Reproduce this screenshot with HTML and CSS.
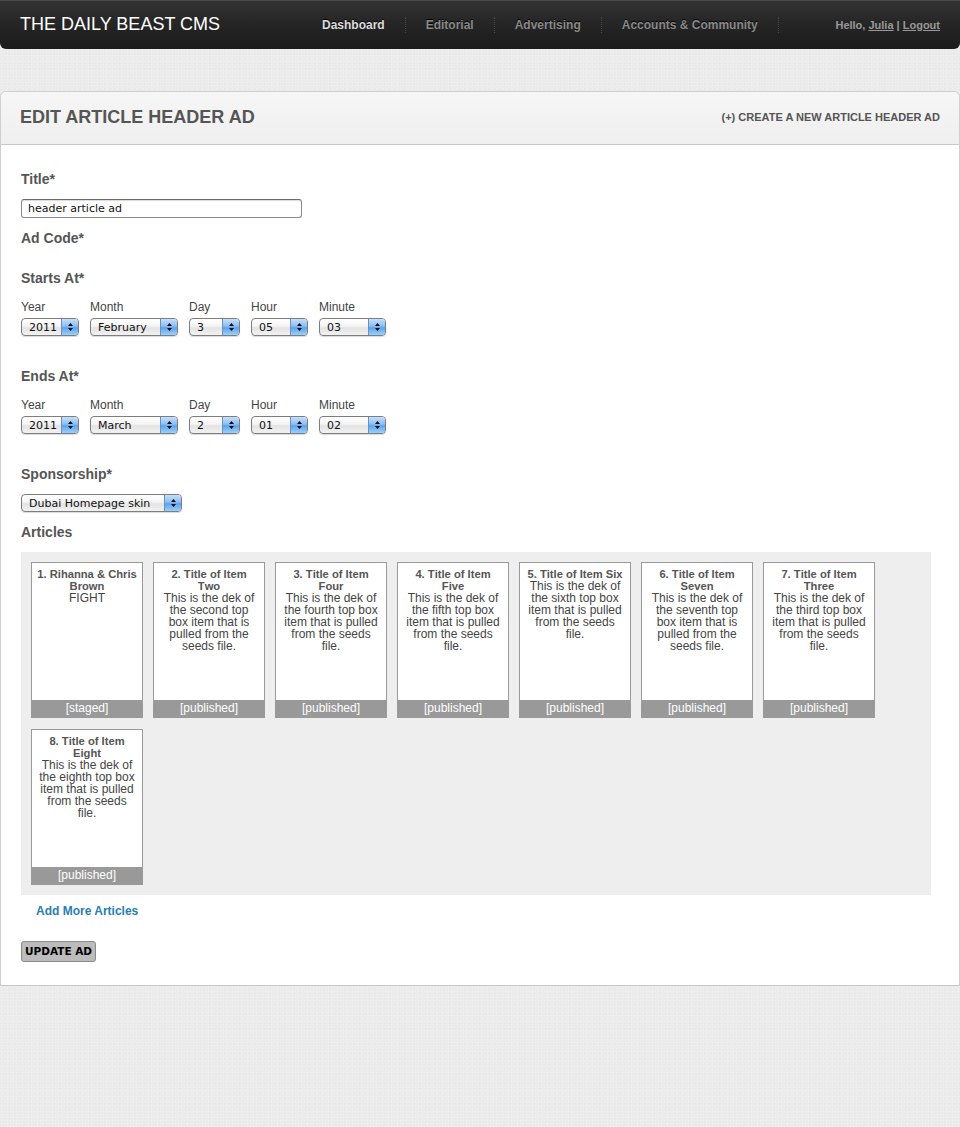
FILE: index.html
```html
<!DOCTYPE html>
<html>
<head>
<meta charset="utf-8">
<title>Edit Article Header Ad</title>
<link rel="stylesheet" href="styles.css">
</head>
<body>
<header class="topbar">
  <div class="logo">THE DAILY BEAST CMS</div>
  <nav class="mainnav">
    <a class="nav-item active">Dashboard</a>
    <a class="nav-item">Editorial</a>
    <a class="nav-item">Advertising</a>
    <a class="nav-item">Accounts &amp; Community</a>
  </nav>
  <div class="user">Hello, <a>Julia</a> | <a>Logout</a></div>
</header>

<section class="panel">
  <div class="panel-head">
    <h1>EDIT ARTICLE HEADER AD</h1>
    <a class="create-link">(+) CREATE A NEW ARTICLE HEADER AD</a>
  </div>
  <div class="panel-body">
    <h3 class="label first">Title*</h3>
    <div class="textinput">header article ad</div>

    <h3 class="label">Ad Code*</h3>

    <h3 class="label gap-l">Starts At*</h3>
    <div class="date-row">
      <div class="field"><div class="sublabel">Year</div><div class="select w-year"><span>2011</span><span class="arrow"><svg width="7" height="10" viewBox="0 0 7 10"><path d="M3.5 1 L6 4 L1 4 Z M3.5 9 L6 6 L1 6 Z" fill="#111"/></svg></span></div></div>
      <div class="field"><div class="sublabel">Month</div><div class="select w-month"><span>February</span><span class="arrow"><svg width="7" height="10" viewBox="0 0 7 10"><path d="M3.5 1 L6 4 L1 4 Z M3.5 9 L6 6 L1 6 Z" fill="#111"/></svg></span></div></div>
      <div class="field"><div class="sublabel">Day</div><div class="select w-day"><span>3</span><span class="arrow"><svg width="7" height="10" viewBox="0 0 7 10"><path d="M3.5 1 L6 4 L1 4 Z M3.5 9 L6 6 L1 6 Z" fill="#111"/></svg></span></div></div>
      <div class="field"><div class="sublabel">Hour</div><div class="select w-hour"><span>05</span><span class="arrow"><svg width="7" height="10" viewBox="0 0 7 10"><path d="M3.5 1 L6 4 L1 4 Z M3.5 9 L6 6 L1 6 Z" fill="#111"/></svg></span></div></div>
      <div class="field"><div class="sublabel">Minute</div><div class="select w-minute"><span>03</span><span class="arrow"><svg width="7" height="10" viewBox="0 0 7 10"><path d="M3.5 1 L6 4 L1 4 Z M3.5 9 L6 6 L1 6 Z" fill="#111"/></svg></span></div></div>
    </div>

    <h3 class="label gap-xl">Ends At*</h3>
    <div class="date-row">
      <div class="field"><div class="sublabel">Year</div><div class="select w-year"><span>2011</span><span class="arrow"><svg width="7" height="10" viewBox="0 0 7 10"><path d="M3.5 1 L6 4 L1 4 Z M3.5 9 L6 6 L1 6 Z" fill="#111"/></svg></span></div></div>
      <div class="field"><div class="sublabel">Month</div><div class="select w-month"><span>March</span><span class="arrow"><svg width="7" height="10" viewBox="0 0 7 10"><path d="M3.5 1 L6 4 L1 4 Z M3.5 9 L6 6 L1 6 Z" fill="#111"/></svg></span></div></div>
      <div class="field"><div class="sublabel">Day</div><div class="select w-day"><span>2</span><span class="arrow"><svg width="7" height="10" viewBox="0 0 7 10"><path d="M3.5 1 L6 4 L1 4 Z M3.5 9 L6 6 L1 6 Z" fill="#111"/></svg></span></div></div>
      <div class="field"><div class="sublabel">Hour</div><div class="select w-hour"><span>01</span><span class="arrow"><svg width="7" height="10" viewBox="0 0 7 10"><path d="M3.5 1 L6 4 L1 4 Z M3.5 9 L6 6 L1 6 Z" fill="#111"/></svg></span></div></div>
      <div class="field"><div class="sublabel">Minute</div><div class="select w-minute"><span>02</span><span class="arrow"><svg width="7" height="10" viewBox="0 0 7 10"><path d="M3.5 1 L6 4 L1 4 Z M3.5 9 L6 6 L1 6 Z" fill="#111"/></svg></span></div></div>
    </div>

    <h3 class="label gap-xl">Sponsorship*</h3>
    <div class="select w-sponsor single"><span>Dubai Homepage skin</span><span class="arrow"><svg width="7" height="10" viewBox="0 0 7 10"><path d="M3.5 1 L6 4 L1 4 Z M3.5 9 L6 6 L1 6 Z" fill="#111"/></svg></span></div>

    <h3 class="label">Articles</h3>
    <div class="articles">
      <div class="card"><div class="card-text"><b>1. Rihanna &amp; Chris Brown</b><br>FIGHT</div><div class="status">[staged]</div></div>
      <div class="card"><div class="card-text"><b>2. Title of Item Two</b><br>This is the dek of the second top box item that is pulled from the seeds file.</div><div class="status">[published]</div></div>
      <div class="card"><div class="card-text"><b>3. Title of Item Four</b><br>This is the dek of the fourth top box item that is pulled from the seeds file.</div><div class="status">[published]</div></div>
      <div class="card"><div class="card-text"><b>4. Title of Item Five</b><br>This is the dek of the fifth top box item that is pulled from the seeds file.</div><div class="status">[published]</div></div>
      <div class="card"><div class="card-text"><b>5. Title of Item Six</b><br>This is the dek of the sixth top box item that is pulled from the seeds file.</div><div class="status">[published]</div></div>
      <div class="card"><div class="card-text"><b>6. Title of Item Seven</b><br>This is the dek of the seventh top box item that is pulled from the seeds file.</div><div class="status">[published]</div></div>
      <div class="card"><div class="card-text"><b>7. Title of Item Three</b><br>This is the dek of the third top box item that is pulled from the seeds file.</div><div class="status">[published]</div></div>
      <div class="card"><div class="card-text"><b>8. Title of Item Eight</b><br>This is the dek of the eighth top box item that is pulled from the seeds file.</div><div class="status">[published]</div></div>
    </div>
    <a class="add-more">Add More Articles</a>
    <div><button class="update-btn">UPDATE AD</button></div>
  </div>
</section>
</body>
</html>
```
FILE: styles.css
```css
html, body {
  margin: 0;
  padding: 0;
}
body {
  background-color: #ebebeb;
  background-image:
    radial-gradient(rgba(255,255,255,0.35) 1px, transparent 1px),
    radial-gradient(rgba(0,0,0,0.015) 1px, transparent 1px);
  background-size: 3px 3px, 5px 5px;
  background-position: 0 0, 2px 1px;
  font-family: "Liberation Sans", Arial, sans-serif;
  color: #555;
  min-height: 1127px;
}

/* top bar */
.topbar {
  height: 49px;
  box-sizing: border-box;
  display: flex;
  align-items: center;
  background: linear-gradient(#343434 0, #272727 40%, #1b1b1b 100%);
  border-top: 1px solid #4a4a4a;
  border-radius: 0 0 6px 6px;
  padding: 0 20px;
}
.logo {
  color: #fff;
  font-size: 18px;
  line-height: 20px;
  width: 302px;
  flex: none;
  margin-top: -2px;
}
.mainnav {
  display: flex;
  align-items: center;
}
.nav-item {
  font-size: 12px;
  font-weight: bold;
  color: #8a8a8a;
  padding: 0 20px;
  line-height: 16px;
  border-right: 1px dotted #484848;
  text-decoration: none;
  text-shadow: 0 -1px 0 #000;
}
.nav-item:first-child {
  padding-left: 0;
}
.nav-item.active {
  color: #ddd;
}
.user {
  margin-left: auto;
  font-size: 11px;
  font-weight: bold;
  color: #999;
}
.user a {
  text-decoration: underline;
  color: #999;
}

/* panel */
.panel {
  margin-top: 42px;
  background: #fff;
  border: 1px solid #cfcfcf;
  border-radius: 6px 6px 0 0;
  border-bottom-color: #c8c8c8;
}
.panel-head {
  height: 52px;
  display: flex;
  align-items: center;
  justify-content: space-between;
  padding: 0 19px 0 19px;
  background: linear-gradient(#f6f6f6, #efefef);
  border-bottom: 1px solid #c9c9c9;
  border-radius: 6px 6px 0 0;
}
.panel-head h1 {
  margin: -2px 0 0 0;
  font-size: 18px;
  font-weight: bold;
  color: #555;
}
.create-link {
  font-size: 11px;
  font-weight: bold;
  color: #555;
  margin-top: -2px;
}
.panel-body {
  padding: 24px 20px 23px 20px;
}

.label {
  margin: 10px 0 0 0;
  font-size: 14px;
  line-height: 20px;
  font-weight: bold;
  color: #555;
}
.label.first { margin-top: 0; }
.label.gap-l { margin-top: 20px; }
.label.gap-xl { margin-top: 30px; }

.textinput {
  margin-top: 10px;
  width: 281px;
  height: 19px;
  box-sizing: border-box;
  border: 1px solid #8a8a8a;
  border-top-color: #6a6a6a;
  border-radius: 3px;
  padding: 0 6px;
  font-family: "DejaVu Sans", sans-serif;
  font-size: 11px;
  line-height: 18px;
  color: #111;
  box-shadow: inset 0 1px 1px rgba(0,0,0,0.15);
}

.date-row {
  display: flex;
  gap: 11px;
  margin-top: 12px;
}
.sublabel {
  font-size: 12px;
  line-height: 15px;
  color: #444;
  margin-bottom: 3px;
}
.select {
  display: flex;
  height: 18px;
  box-sizing: border-box;
  border: 1px solid #7d7d7d;
  border-radius: 4px;
  background: linear-gradient(#fff 0, #f4f4f4 45%, #e3e3e3 55%, #f2f2f2 100%);
  font-family: "DejaVu Sans", sans-serif;
  font-size: 11px;
  line-height: 17px;
  color: #111;
  overflow: hidden;
  box-shadow: 0 1px 1px rgba(0,0,0,0.15);
}
.select > span:first-child {
  flex: 1;
  padding-left: 7px;
  white-space: nowrap;
}
.select .arrow {
  width: 16px;
  flex: none;
  display: flex;
  align-items: center;
  justify-content: center;
  border-left: 1px solid #6a8fc5;
  background: linear-gradient(#c5e0fb 0, #8dbdf2 45%, #5ea2ec 55%, #9cd0fb 100%);
}
.w-year { width: 58px; }
.w-month { width: 88px; }
.w-day { width: 51px; }
.w-hour { width: 57px; }
.w-minute { width: 67px; }
.w-sponsor { width: 161px; }
.select.single { margin-top: 10px; }

.articles {
  margin-top: 10px;
  width: 910px;
  box-sizing: border-box;
  background: #eee;
  padding: 10px;
  display: flex;
  flex-wrap: wrap;
  gap: 11px 10px;
}
.card {
  width: 112px;
  height: 156px;
  box-sizing: border-box;
  border: 1px solid #999;
  background: #fff;
  display: flex;
  flex-direction: column;
}
.card-text {
  padding: 5px 5px 0 5px;
  text-align: center;
  font-size: 12px;
  line-height: 12px;
  color: #444;
}
.card-text b {
  font-size: 11.2px;
  font-kerning: none;
  color: #555;
}
.status {
  margin-top: auto;
  height: 17px;
  background: #999;
  color: #fff;
  font-size: 12px;
  line-height: 17px;
  text-align: center;
}

.add-more {
  display: block;
  margin: 9px 0 0 15px;
  font-size: 12px;
  line-height: 14px;
  font-weight: bold;
  color: #2a7db3;
}
.update-btn {
  margin-top: 23px;
  height: 21px;
  padding: 0 3px;
  border: 1px solid #8a8a8a;
  border-radius: 3px;
  background: #bcbcbc;
  font-family: "DejaVu Sans", sans-serif;
  font-size: 10.5px;
  font-weight: bold;
  color: #000;
  line-height: 19px;
}
```
